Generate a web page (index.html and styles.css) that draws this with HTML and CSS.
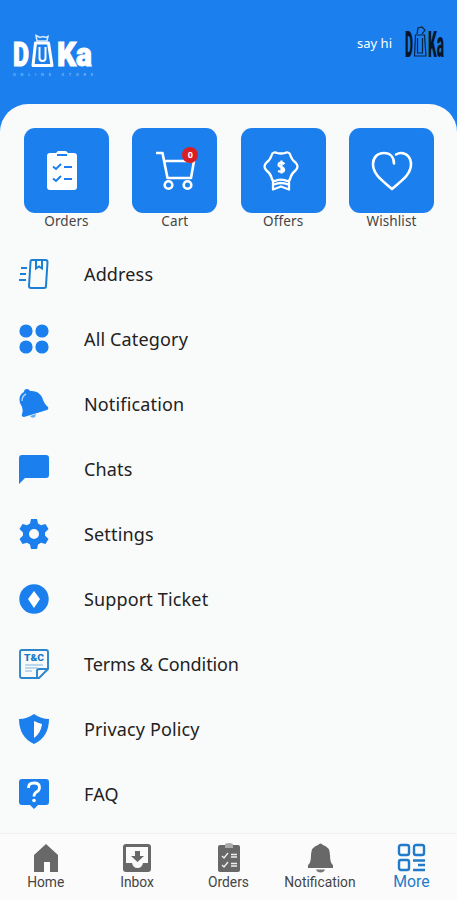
FILE: index.html
```html
<!DOCTYPE html>
<html lang="en">
<head>
    <meta charset="UTF-8" />
    <meta name="viewport" content="width=device-width, initial-scale=1.0"/>
    <title>Duka - More</title>
    <link rel="stylesheet" href="styles.css">
</head>
<body>

<header class="header">
    <svg class="logo" width="84" height="46" viewBox="0 0 84 46">
        <g class="logo-text">
            <text x="2" y="32" textLength="16" lengthAdjust="spacingAndGlyphs">D</text>
            <text x="46" y="32" textLength="35" lengthAdjust="spacingAndGlyphs">Ka</text>
        </g>
        <path d="M24.500 9h13l3.500 22.500H22z" fill="none" stroke="#fff" stroke-width="3" stroke-linejoin="round"/>
        <path d="M28.500 13v11q0 3 3 3t3-3V13" fill="none" stroke="#fff" stroke-width="2"/>
        <path d="M25 1.500l4 2 3-1 3 1 2-1-1 4.500H26z" fill="none" stroke="#d7eaff" stroke-width="1.500"/>
        <text class="logo-sub" x="2" y="42" textLength="80">ONLINE STORE</text>
    </svg>
    <div class="user">
        <span>say hi</span>
        <svg width="42" height="38" viewBox="0 0 42 38">
            <g class="avatar-text">
                <text x="1" y="33" textLength="8" lengthAdjust="spacingAndGlyphs">D</text>
                <text x="24" y="33" textLength="16" lengthAdjust="spacingAndGlyphs">Ka</text>
            </g>
            <path d="M11.500 11h9l1.500 21H10.500zM13.500 14v15h5V14M13 10l1-6 4-1 3 3-3 4" fill="none" stroke="#0b2342" stroke-width="1.200"/>
        </svg>
    </div>
</header>

<main class="panel">
    <div class="tiles">
        <a class="tile">
            <span class="tile-box">
                <svg width="85" height="85" viewBox="0 0 85 85">
                    <path d="M26 25h6l2-2h8l2 2h6q3 0 3 3v31q0 3-3 3H26q-3 0-3-3V28q0-3 3-3z" fill="#fff"/>
                    <path d="M33 27h10M40 39h8M40 51h8M29 38.500l3 2.500 5-5M29 50.500l3 2.500 5-5" fill="none" stroke="#1b7fee" stroke-width="2"/>
                </svg>
            </span>
            <span>Orders</span>
        </a>
        <a class="tile">
            <span class="tile-box">
                <svg width="85" height="85" viewBox="0 0 85 85" fill="none" stroke="#fff" stroke-width="2.600" stroke-linejoin="round">
                    <path d="M24 25h6.500l5 25h23.500l3-17H32.500"/>
                    <circle cx="36.500" cy="57" r="3.800"/>
                    <circle cx="55.500" cy="57" r="3.800"/>
                </svg>
                <b class="count">0</b>
            </span>
            <span>Cart</span>
        </a>
        <a class="tile">
            <span class="tile-box">
                <svg width="85" height="85" viewBox="0 0 85 85" fill="none" stroke="#fff" stroke-width="2.300" stroke-linejoin="round">
                    <path d="M33 24.500q1.500-.5 3 .5 4 1 8 0 1.500-1 3-.5 2 .5 2.500 3 1 4 5 7 2 2 2 4t-2 4q-4 3-5 7-.5 3-2.500 3.500-1.500 0-3-.8-4-1-8 0-1.500.8-3 .8-2-.5-2.500-3.500-1-4-5-7-2-2-2-4t2-4q4-3 5-7 .5-2.500 2.500-3z"/>
                    <path d="M32 52v9.500l8-3 8 3V52M33 56.500q7-3 14 0"/>
                    <path d="M43.500 36q-3-2.500-5.500-.5-1.500 2.500 2 3.500t3 3.500-6 .5M40.500 32.500v13"/>
                </svg>
            </span>
            <span>Offers</span>
        </a>
        <a class="tile">
            <span class="tile-box">
                <svg width="85" height="85" viewBox="0 0 85 85" fill="none" stroke="#fff" stroke-width="2.600" stroke-linecap="round">
                    <path d="M45 35.500C45 29 41 25 35 25c-7 0-11 5-11 11 0 11 10 17 19 25 9-8 19-14 19-25 0-6-4-11-10-11q-2.500 0-5 1.500" stroke-linejoin="round"/>
                </svg>
            </span>
            <span>Wishlist</span>
        </a>
    </div>

    <nav class="menu">
        <a class="row">
            <svg width="30" height="30" viewBox="0 0 30 30" fill="none" stroke="#1b7fd4" stroke-width="2">
                <path d="M13 1h13.500q2 0 2 2l-1.500 24q0 2-2 2H12q-2 0-2-2l1.500-24q0-2 1.500-2z"/>
                <path d="M17 1v8.500l3-2 3 2V1M2 9h6M1 15h6M0 21h7"/>
            </svg>
            <span>Address</span>
        </a>
        <a class="row">
            <svg width="30" height="30" viewBox="0 0 30 30" fill="#1b7fee">
                <circle cx="7" cy="7" r="6.600"/><circle cx="23" cy="7" r="6.600"/>
                <circle cx="7" cy="23" r="6.600"/><circle cx="23" cy="23" r="6.600"/>
            </svg>
            <span>All Category</span>
        </a>
        <a class="row">
            <svg width="30" height="30" viewBox="0 0 30 30">
                <path d="M5 3q0-3 3-3 2 0 3 2 8-1 12 6 2 7 6 10 1 2-1 3L5 28q-3 0-2-3 2-5-2-11Q-1 6 5 3z" fill="#1b7fee"/>
                <path d="M3 12q0-5 4-7" fill="none" stroke="#a8d4ff" stroke-width="1.400"/>
                <path d="M11 27q2 3 5 1l1-3z" fill="#62adf5"/>
            </svg>
            <span>Notification</span>
        </a>
        <a class="row">
            <svg width="30" height="30" viewBox="0 0 30 30"><path d="M3 1h24q3 0 3 3v17q0 3-3 3H6l-6 6V4q0-3 3-3z" fill="#1b7fee"/></svg>
            <span>Chats</span>
        </a>
        <a class="row">
            <svg width="30" height="30" viewBox="0 0 30 30">
                <path d="M12 0h6l1 4.500 3 1.700L26.500 5l3 5-3.500 3.500v3L29.500 20l-3 5-4.500-1.200-3 1.700L18 30h-6l-1-4.500-3-1.700L3.500 25l-3-5L4 16.500v-3L.500 10l3-5L8 6.200l3-1.700zM15 10a5 5 0 1 0 0 10 5 5 0 1 0 0-10z" fill="#1b7fee" fill-rule="evenodd"/>
            </svg>
            <span>Settings</span>
        </a>
        <a class="row">
            <svg width="30" height="30" viewBox="0 0 30 30">
                <circle cx="15" cy="15" r="14.700" fill="#1b7fee"/>
                <path d="M15 7l6 8-6 9-6-9z" fill="#fff"/>
            </svg>
            <span>Support Ticket</span>
        </a>
        <a class="row">
            <svg width="30" height="30" viewBox="0 0 30 30">
                <path d="M3 1h24q2 0 2 2v17l-9 9H3q-2 0-2-2V3q0-2 2-2zM29 20h-9q-2 0-2 2v7" fill="none" stroke="#2b86ce" stroke-width="1.900"/>
                <text class="tc" x="5" y="12" textLength="20" lengthAdjust="spacingAndGlyphs">T&amp;C</text>
                <path d="M6 16h18M6 19h13M6 22h7" stroke="#7bb5e6" stroke-width="1.200"/>
            </svg>
            <span class="long">Terms &amp; Condition</span>
        </a>
        <a class="row">
            <svg width="30" height="30" viewBox="0 0 30 30">
                <path d="M15 0q7 5 15 5 0 18-15 25Q0 23 0 5q8 0 15-5z" fill="#1b7fee"/>
                <path d="M15 7q4 2 8 3-1 9-8 14z" fill="#fff"/>
            </svg>
            <span>Privacy Policy</span>
        </a>
        <a class="row">
            <svg width="30" height="30" viewBox="0 0 30 30">
                <path d="M3 0h24q3 0 3 3v20q0 3-3 3h-8l-4 4-4-4H3q-3 0-3-3V3q0-3 3-3z" fill="#1b7fee"/>
                <path d="M9.500 9q0-5 5.500-5t5.500 4.500q0 3-3 4.500-2.500 1.500-2.500 4.500" fill="none" stroke="#fff" stroke-width="2.800"/>
                <circle cx="15" cy="21.500" r="1.800" fill="#fff"/>
            </svg>
            <span>FAQ</span>
        </a>
    </nav>
</main>

<footer class="tabbar">
    <a class="tab">
        <svg width="30" height="30" viewBox="0 0 30 30"><path d="M15 1l12 11v17h-8V19h-6v10H3V12z" fill="#686868"/></svg>
        <span>Home</span>
    </a>
    <a class="tab">
        <svg width="30" height="30" viewBox="0 0 30 30">
            <path d="M4 1h22q3 0 3 3v22q0 3-3 3H4q-3 0-3-3V4q0-3 3-3zM4 4v16h6q1 5 5.500 5t5.500-5h5V4zM13 8h5v5h4l-6.500 6L9 13h4z" fill="#686868" fill-rule="evenodd"/>
        </svg>
        <span>Inbox</span>
    </a>
    <a class="tab">
        <svg width="30" height="30" viewBox="0 0 30 30">
            <path d="M6 2h18q2 0 2 2v23q0 2-2 2H6q-2 0-2-2V4q0-2 2-2z" fill="#686868"/>
            <path d="M11 1q4-2 8 0v4h-8z" fill="#aaa"/>
            <path d="M8 13l2 2 4-5M8 22l2 2 4-5M17 11.500h6M17 14h6M17 20.500h6M17 23h6" fill="none" stroke="#eee" stroke-width="1.400"/>
        </svg>
        <span>Orders</span>
    </a>
    <a class="tab">
        <svg width="30" height="30" viewBox="0 0 30 30">
            <path d="M13 2q2.500-3 5 0 7 2 7 10 0 8 3 10v3H3v-3q3-2 3-10 0-8 7-10z" fill="#686868"/>
            <path d="M11 26.500h9q-1 3-4.500 3t-4.500-3z" fill="#777"/>
        </svg>
        <span>Notification</span>
    </a>
    <a class="tab active">
        <svg width="30" height="30" viewBox="0 0 30 30" fill="none" stroke="#217bca" stroke-width="2.400">
            <rect x="3" y="2" width="10" height="10" rx="2"/>
            <rect x="18" y="2" width="10" height="10" rx="2"/>
            <rect x="3" y="17" width="10" height="10" rx="2"/>
            <path d="M17 17.500h12M22 22h7M17 27h12"/>
        </svg>
        <span>More</span>
    </a>
</footer>

</body>
</html>
```
FILE: styles.css
```css
* { box-sizing: border-box; }
body {
    margin: 0;
    height: 900px;
    display: flex;
    flex-direction: column;
    overflow: hidden;
    background: #1b7fee;
    color: #222;
    font-family: "Noto Sans", sans-serif;
}
.header {
    height: 104px;
    padding: 24px 11px 0;
    display: flex;
    justify-content: space-between;
    align-items: flex-start;
    color: white;
}
.logo { margin-top: 10px; }
.logo-text {
    font: 900 34px Roboto, sans-serif;
    fill: white;
    stroke: white;
    stroke-width: 1;
}
.logo-sub { font: 700 4px Roboto, sans-serif; fill: #77b6fa; }
.user {
    display: flex;
    align-items: center;
    gap: 12px;
    font-size: 13px;
}
.avatar-text {
    font: 900 36px Roboto, sans-serif;
    fill: #071626;
}
.panel {
    flex: 1;
    padding-top: 24px;
    background: #f9fafa;
    border-radius: 28px 28px 0 0;
}
.tiles {
    height: 113px;
    padding: 0 23px 0 24px;
    display: flex;
    justify-content: space-between;
}
.tile {
    width: 85px;
    display: flex;
    flex-direction: column;
    align-items: center;
    font-size: 13.5px;
    letter-spacing: 0.1px;
    line-height: 17px;
    color: #444;
}
.tile-box {
    position: relative;
    width: 85px;
    height: 85px;
    border-radius: 11px;
    background: #1b7fee;
}
.tile-box svg { display: block; }
.count {
    position: absolute;
    top: 19px;
    right: 19px;
    width: 16px;
    height: 16px;
    border-radius: 50%;
    background: #d91f26;
    color: white;
    font-size: 9px;
    line-height: 16px;
    text-align: center;
}
.row {
    height: 65.1px;
    padding-left: 19px;
    display: flex;
    align-items: center;
    gap: 35px;
    font-size: 18px;
    letter-spacing: 0.15px;
    white-space: nowrap;
}
.long { letter-spacing: -0.1px; }
.tc {
    font: 900 9px Roboto, sans-serif;
    letter-spacing: 0;
    fill: #1b76c4;
}
.tabbar {
    height: 67px;
    padding-top: 9px;
    display: flex;
    background: #fbfbfb;
    border-top: 1px solid #f1f1f1;
    font-family: Roboto, sans-serif;
}
.tab {
    flex: 1;
    display: flex;
    flex-direction: column;
    align-items: center;
    font-size: 13.8px;
    line-height: 18px;
    color: #444;
}
.active {
    color: #217bca;
    font-size: 15.8px;
}
```
